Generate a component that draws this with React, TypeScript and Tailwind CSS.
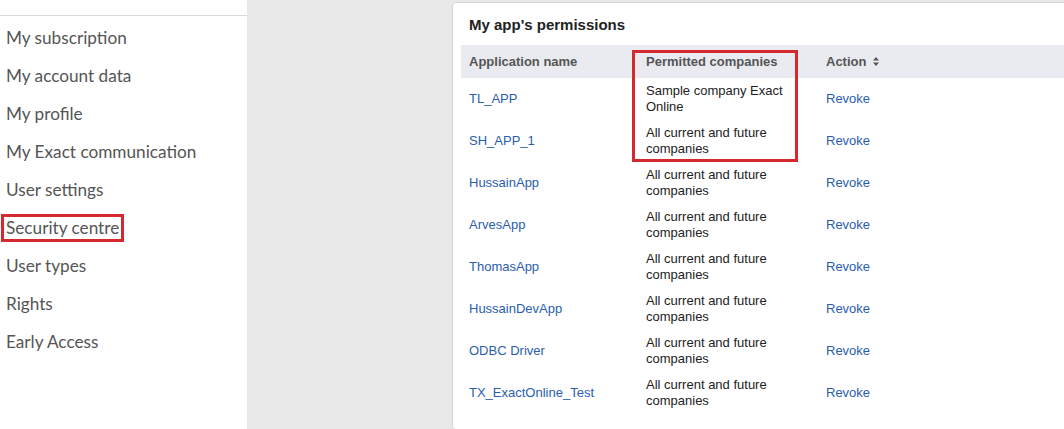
const menu = [
  'My subscription',
  'My account data',
  'My profile',
  'My Exact communication',
  'User settings',
  'Security centre',
  'User types',
  'Rights',
  'Early Access',
]

const apps = [
  { name: 'TL_APP', companies: 'Sample company Exact Online' },
  { name: 'SH_APP_1', companies: 'All current and future companies' },
  { name: 'HussainApp', companies: 'All current and future companies' },
  { name: 'ArvesApp', companies: 'All current and future companies' },
  { name: 'ThomasApp', companies: 'All current and future companies' },
  { name: 'HussainDevApp', companies: 'All current and future companies' },
  { name: 'ODBC Driver', companies: 'All current and future companies' },
  { name: 'TX_ExactOnline_Test', companies: 'All current and future companies' },
]

export default function App() {
  return (
    <div className="flex h-[429px] w-[1064px] overflow-hidden bg-[#e8e8e8]">
      {/* Sidebar */}
      <aside className="w-[247px] shrink-0 bg-white font-['Lato',sans-serif]">
        <div className="mt-[15px] border-t border-[#d9d9d9] pt-[3px]">
          {menu.map((m) => (
            <div key={m} className="flex h-[38px] items-center px-[1px]">
              <span
                className={
                  m === 'Security centre'
                    ? 'border-[3px] border-[#d42a2f] px-[2px] text-[17.2px] leading-[22px] text-[#555]'
                    : 'px-[5px] text-[17.2px] leading-[22px] text-[#555]'
                }
              >
                {m}
              </span>
            </div>
          ))}
        </div>
      </aside>

      {/* Content */}
      <main className="flex-1 pl-[205px] pt-[2px]">
        <div className="h-[428px] w-[700px] rounded-[4px] border border-[#d6d6d6] bg-white px-[8px] font-['Liberation_Sans',Arial,sans-serif]">
          <h2 className="flex h-[42px] items-center pl-[8px] pt-[3px] text-[15px] font-bold text-[#222]">
            My app's permissions
          </h2>
          <div className="relative">
            <div className="flex h-[33px] items-center bg-[#e9ebf0] text-[13px] font-bold text-[#555]">
              <div className="w-[177px] pl-[8px]">Application name</div>
              <div className="w-[180px] pl-[8px]">Permitted companies</div>
              <div className="flex items-center gap-[7px] pl-[8px]">
                Action
                <svg width="6" height="9" viewBox="0 0 6 9" fill="#555">
                  <path d="M3 0 L6 3.5 H0 Z" />
                  <path d="M3 9 L6 5.5 H0 Z" />
                </svg>
              </div>
            </div>
            {apps.map((a) => (
              <div key={a.name} className="flex h-[42px] items-center text-[13px] leading-[16px]">
                <div className="w-[177px] pl-[8px] text-[#2a5db0]">{a.name}</div>
                <div className="w-[180px] pl-[8px] pr-[14px] text-[#222]">{a.companies}</div>
                <div className="pl-[8px] text-[#2a5db0]">Revoke</div>
              </div>
            ))}
            {/* highlight box */}
            <div className="pointer-events-none absolute left-[171px] top-[5px] h-[112px] w-[166px] border-[3px] border-[#d42a2f]" />
          </div>
        </div>
      </main>
    </div>
  )
}
